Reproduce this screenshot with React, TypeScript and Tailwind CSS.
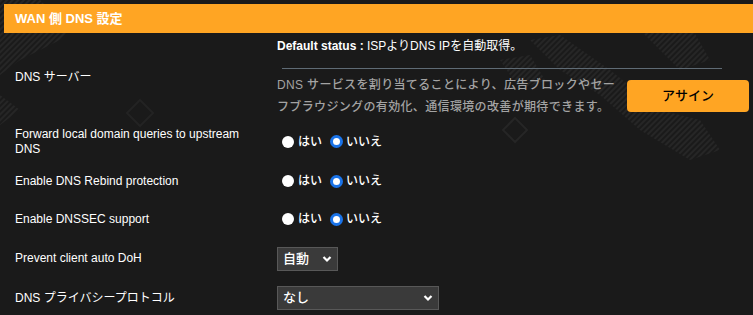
import React from "react";

const latin = "font-['Liberation_Sans','Noto_Sans_CJK_JP',sans-serif]";

function Radio({ checked }: { checked: boolean }) {
  return checked ? (
    <span className="inline-block w-[13px] h-[13px] rounded-full border-[3px] border-[#1a73e8] bg-white ml-[5px] mr-[3px]" />
  ) : (
    <span className="inline-block w-[12px] h-[12px] rounded-full bg-white ml-[5px] mr-[4px]" />
  );
}

function YesNo() {
  return (
    <div className="flex items-center text-[12px] text-white font-medium">
      <Radio checked={false} />
      <span>はい</span>
      <span className="w-[3px]" />
      <Radio checked={true} />
      <span>いいえ</span>
    </div>
  );
}

function Select({ value, width }: { value: string; width: string }) {
  return (
    <div
      className={`${width} h-[24px] flex items-center justify-between bg-[#3a3a3a] border border-[#585858] pl-[5px] pr-[5px] text-white text-[13px] font-medium`}
    >
      <span>{value}</span>
      <svg width="10" height="8" viewBox="0 0 10 8">
        <path d="M1.5 2 L5 5.5 L8.5 2" stroke="white" strokeWidth="2.2" fill="none" />
      </svg>
    </div>
  );
}

function Row({ label, height, children }: { label: React.ReactNode; height: string; children: React.ReactNode }) {
  return (
    <div className={`flex items-center ${height} pl-[15px]`}>
      <div className="w-[262px] text-[12px] leading-[15px] text-white pr-4">{label}</div>
      <div className="flex-1">{children}</div>
    </div>
  );
}

// faint striped decoration behind the form
function Decor() {
  return (
    <svg className="absolute inset-0 pointer-events-none" width="753" height="315">
      <defs>
        <pattern id="stripes" width="4" height="4" patternUnits="userSpaceOnUse" patternTransform="rotate(45)">
          <rect width="2" height="4" fill="#262626" />
        </pattern>
      </defs>
      <polygon points="0,0 40,0 70,30 60,40 20,60 0,75" fill="url(#stripes)" />
      <polygon points="0,95 20,110 0,125" fill="url(#stripes)" />
      <polygon points="530,40 560,35 610,70 660,110 700,120 720,150 690,160 640,130 600,95 560,70" fill="url(#stripes)" />
      <polygon points="640,30 690,25 710,60 680,70" fill="url(#stripes)" />
      <polygon points="500,60 530,55 545,80 520,90" fill="url(#stripes)" />
      <polygon points="515,118 527,130 515,142 503,130" fill="none" stroke="#262626" strokeWidth="2" />
      <polygon points="140,100 153,113 140,126 127,113" fill="none" stroke="#232323" strokeWidth="2" />
    </svg>
  );
}

export default function App() {
  return (
    <div className={`relative w-[753px] h-[315px] overflow-hidden bg-[#1a1a1a] ${latin}`}>
      <Decor />
      <div className="relative pt-[4px]">
        <div className="ml-[4px] h-[29px] bg-[#ffa523] flex items-center pl-[11px] text-white text-[13px] font-bold">
          WAN 側 DNS 設定
        </div>

        <div className="flex items-center h-[88px] pl-[15px]">
          <div className="w-[262px] text-[12px] text-white">DNS サーバー</div>
          <div className="flex flex-col self-start pt-[5px]">
            <div className="text-[12px] leading-[16px] text-white">
              <span className="font-bold">Default status : </span>ISPよりDNS IPを自動取得。
            </div>
            <div className="ml-[5px] mt-[14px] w-[440px] h-px bg-[#5f6b75]" />
            <div className="flex items-center mt-[5px]">
              <div className="w-[350px] text-[12px] leading-[22px] tracking-[0.35px] text-[#a3a3a3] font-medium">
                DNS サービスを割り当てることにより、広告ブロックやセー
                <br />
                フブラウジングの有効化、通信環境の改善が期待できます。
              </div>
              <button className="w-[122px] h-[32px] rounded-[4px] bg-[#ffa523] text-black text-[13px] font-medium">
                アサイン
              </button>
            </div>
          </div>
        </div>

        <Row label={<>Forward local domain queries to upstream<br />DNS</>} height="h-[41px]">
          <YesNo />
        </Row>
        <Row label="Enable DNS Rebind protection" height="h-[38px]">
          <YesNo />
        </Row>
        <Row label="Enable DNSSEC support" height="h-[38px]">
          <YesNo />
        </Row>
        <Row label="Prevent client auto DoH" height="h-[41px]">
          <Select value="自動" width="w-[61px]" />
        </Row>
        <Row label="DNS プライバシープロトコル" height="h-[38px]">
          <Select value="なし" width="w-[162px]" />
        </Row>
      </div>
    </div>
  );
}
